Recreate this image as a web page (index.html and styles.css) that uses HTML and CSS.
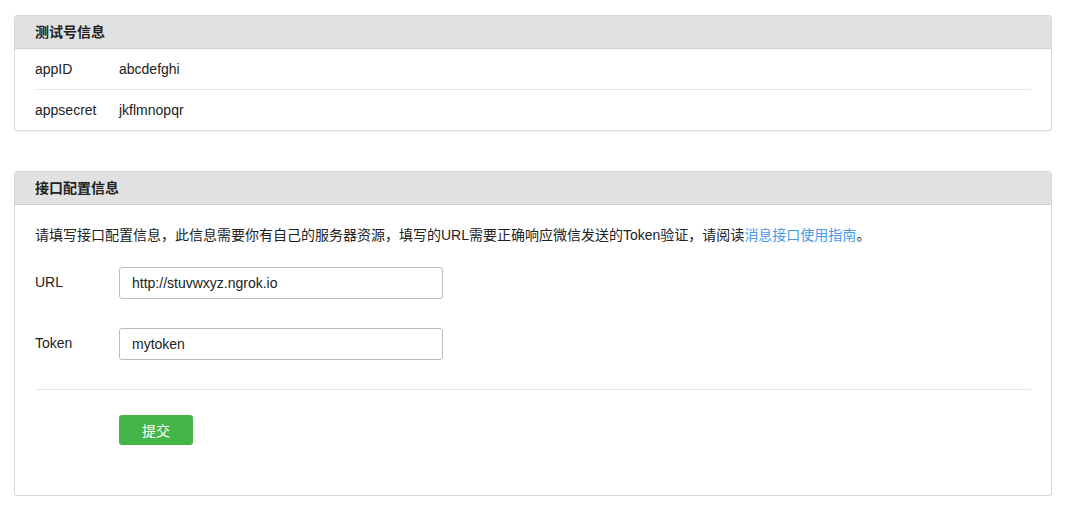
FILE: index.html
```html
<!DOCTYPE html>
<html lang="zh-CN">
<head>
<meta charset="utf-8">
<title>接口配置信息</title>
<link rel="stylesheet" href="styles.css">
</head>
<body>
<div class="page">
  <section class="panel">
    <div class="panel-head">测试号信息</div>
    <div class="info-body">
      <div class="info-row"><span class="info-label">appID</span><span class="info-value">abcdefghi</span></div>
      <div class="info-row"><span class="info-label">appsecret</span><span class="info-value">jkflmnopqr</span></div>
    </div>
  </section>

  <section class="panel panel-config">
    <div class="panel-head">接口配置信息</div>
    <div class="config-body">
      <p class="desc">请填写接口配置信息，此信息需要你有自己的服务器资源，填写的URL需要正确响应微信发送的Token验证，请阅读<a class="link" href="#">消息接口使用指南</a>。</p>
      <div class="form-row">
        <label class="form-label">URL</label>
        <input class="form-input" type="text" value="http://stuvwxyz.ngrok.io">
      </div>
      <div class="form-row">
        <label class="form-label">Token</label>
        <input class="form-input" type="text" value="mytoken">
      </div>
      <div class="form-actions">
        <button class="btn-submit" type="button">提交</button>
      </div>
    </div>
  </section>
</div>
</body>
</html>
```
FILE: styles.css
```css
html, body {
  margin: 0;
  padding: 0;
  background: #fff;
}
body {
  font-family: "Liberation Sans", "Noto Sans CJK SC", sans-serif;
  font-size: 14px;
  color: #222;
}
.page {
  padding: 15px 15px 0 14px;
}
.panel {
  border: 1px solid #d9d9d9;
  border-radius: 3px;
  background: #fff;
  box-shadow: 0 1px 1px rgba(0,0,0,0.04);
}
.panel-config {
  margin-top: 40px;
}
.panel-head {
  height: 32px;
  line-height: 32px;
  padding: 0 20px;
  background: #e1e1e1;
  border-bottom: 1px solid #cfcfcf;
  font-weight: bold;
  font-size: 14px;
  color: #222;
  border-radius: 3px 3px 0 0;
}
.info-body {
  padding: 0 20px;
}
.info-row {
  display: flex;
  align-items: center;
  height: 40px;
  border-bottom: 1px solid #e7e7e7;
}
.info-row:last-child {
  border-bottom: none;
}
.info-label {
  width: 84px;
}
.config-body {
  padding: 20px 20px 50px;
}
.desc {
  margin: 0;
  line-height: 20px;
}
.link {
  color: #459ae9;
  text-decoration: none;
}
.form-row {
  display: flex;
  align-items: center;
  margin-top: 22px;
}
.form-row + .form-row {
  margin-top: 29px;
}
.form-label {
  width: 84px;
  margin-top: -3px;
}
.form-input {
  box-sizing: border-box;
  width: 324px;
  height: 32px;
  padding: 0 12px;
  border: 1px solid #bcbcbc;
  border-radius: 3px;
  font-family: "Liberation Sans", "Noto Sans CJK SC", sans-serif;
  font-size: 14px;
  color: #222;
  outline: none;
}
.form-actions {
  margin-top: 29px;
  border-top: 1px solid #e7e7e7;
  padding-top: 25px;
  padding-left: 84px;
}
.btn-submit {
  width: 74px;
  height: 30px;
  border: none;
  border-radius: 3px;
  background: #44b549;
  color: #fff;
  font-family: "Liberation Sans", "Noto Sans CJK SC", sans-serif;
  font-size: 14px;
  cursor: pointer;
}
```
